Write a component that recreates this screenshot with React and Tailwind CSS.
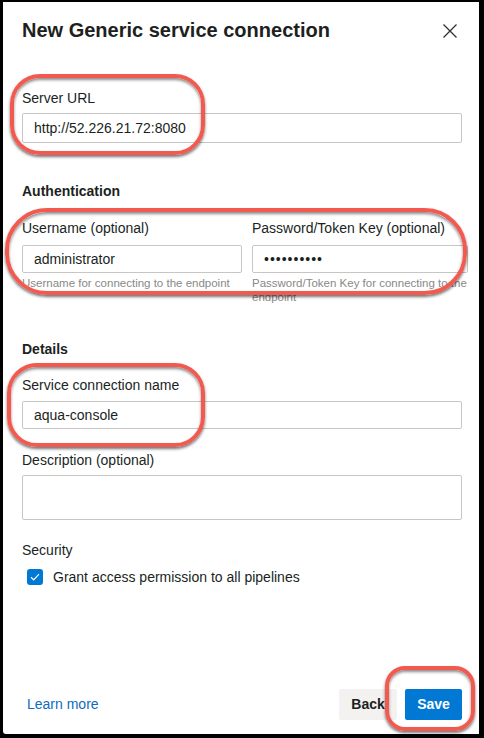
import React from "react";

function Label({ children, className = "" }) {
  return (
    <div className={`text-[14px] leading-5 text-[#201f1e] ${className}`}>{children}</div>
  );
}

function TextBox({ value, className = "", type = "text" }) {
  return (
    <input
      type={type}
      readOnly
      value={value}
      className={`block w-full border border-[#c8c6c4] rounded-[2px] bg-white px-[11px] text-[14px] text-[#201f1e] outline-none ${className}`}
    />
  );
}

// red annotation ring drawn over the form
function Ring({ className }) {
  return (
    <div
      className={`absolute pointer-events-none border-[4px] border-[#f25a4f] shadow-[0_2px_3px_rgba(0,0,0,0.55),inset_0_2px_3px_rgba(0,0,0,0.45)] ${className}`}
    />
  );
}

export default function App() {
  return (
    <div
      className="w-[484px] h-[738px] bg-black pt-[2px] pl-[3px] pr-[5px] pb-[4px]"
      style={{ fontFamily: '"Liberation Sans", Arial, sans-serif' }}
    >
      <div className="relative h-full bg-white flex flex-col pl-[19px] pr-[17px] pt-[14px] pb-[14px] rounded-bl-[3px]">
        {/* Header */}
        <div className="flex items-center justify-between">
          <h1 className="text-[20px] leading-[28px] font-bold text-[#201f1e]">
            New Generic service connection
          </h1>
          <svg width="16" height="16" viewBox="0 0 16 16" className="mr-[4px] mt-[2px]">
            <path d="M1.5 1.5 L14.5 14.5 M14.5 1.5 L1.5 14.5" stroke="#323130" strokeWidth="1.3" fill="none" />
          </svg>
        </div>

        {/* Server URL */}
        <Label className="mt-[44px]">Server URL</Label>
        <TextBox value="http://52.226.21.72:8080" className="mt-[5px] h-[30px]" />

        {/* Authentication */}
        <div className="mt-[38px] text-[14px] leading-5 font-semibold text-[#201f1e]">Authentication</div>
        <div className="mt-[17px] grid grid-cols-[220px_1fr] gap-[10px]">
          <div>
            <Label>Username (optional)</Label>
            <TextBox value="administrator" className="mt-[7px] h-[28px]" />
            <div className="mt-[3px] text-[11.5px] leading-[14px] text-[#8a8886]">
              Username for connecting to the endpoint
            </div>
          </div>
          <div>
            <Label>Password/Token Key (optional)</Label>
            <TextBox value="••••••••••" className="mt-[7px] h-[28px] tracking-[1px]" />
            <div className="mt-[3px] w-[216px] h-[28px] text-[11.5px] leading-[14px] text-[#8a8886]">
              Password/Token Key for connecting to the endpoint
            </div>
          </div>
        </div>

        {/* Details */}
        <div className="mt-[35px] text-[14px] leading-5 font-semibold text-[#201f1e]">Details</div>
        <Label className="mt-[16px]">Service connection name</Label>
        <TextBox value="aqua-console" className="mt-[6px] h-[28px]" />

        <Label className="mt-[21px]">Description (optional)</Label>
        <textarea
          readOnly
          className="block mt-[5px] h-[45px] w-full resize-none border border-[#c8c6c4] rounded-[2px] outline-none"
        />

        {/* Security */}
        <Label className="mt-[20px]">Security</Label>
        <div className="mt-[7px] flex items-center h-5 pl-[5px]">
          <div className="w-[16px] h-[16px] rounded-[3px] bg-[#0078d4] flex items-center justify-center">
            <svg width="10" height="8" viewBox="0 0 10 8">
              <path d="M1 4.2 L3.7 6.8 L9 1.2" stroke="white" strokeWidth="1.2" fill="none" />
            </svg>
          </div>
          <span className="ml-[10px] text-[14px] text-[#201f1e]">Grant access permission to all pipelines</span>
        </div>

        {/* Footer */}
        <div className="mt-auto flex items-center justify-between">
          <a className="pl-[5px] text-[14px] text-[#0f6cbd]">Learn more</a>
          <div className="flex gap-[8px]">
            <button className="h-[31px] w-[58px] rounded-[2px] bg-[#f3f2f1] text-[14px] font-bold text-[#201f1e]">
              Back
            </button>
            <button className="h-[31px] w-[57px] rounded-[2px] bg-[#0078d4] text-[14px] font-bold text-white">
              Save
            </button>
          </div>
        </div>

        {/* Annotation rings */}
        <Ring className="left-[7px] top-[72px] w-[195px] h-[81px] rounded-[30px]" />
        <Ring className="left-[2px] top-[206px] w-[462px] h-[87px] rounded-[42px]" />
        <Ring className="left-[4px] top-[361px] w-[198px] h-[84px] rounded-[30px]" />
        <Ring className="left-[382px] top-[664px] w-[90px] h-[65px] rounded-[20px]" />
      </div>
    </div>
  );
}
